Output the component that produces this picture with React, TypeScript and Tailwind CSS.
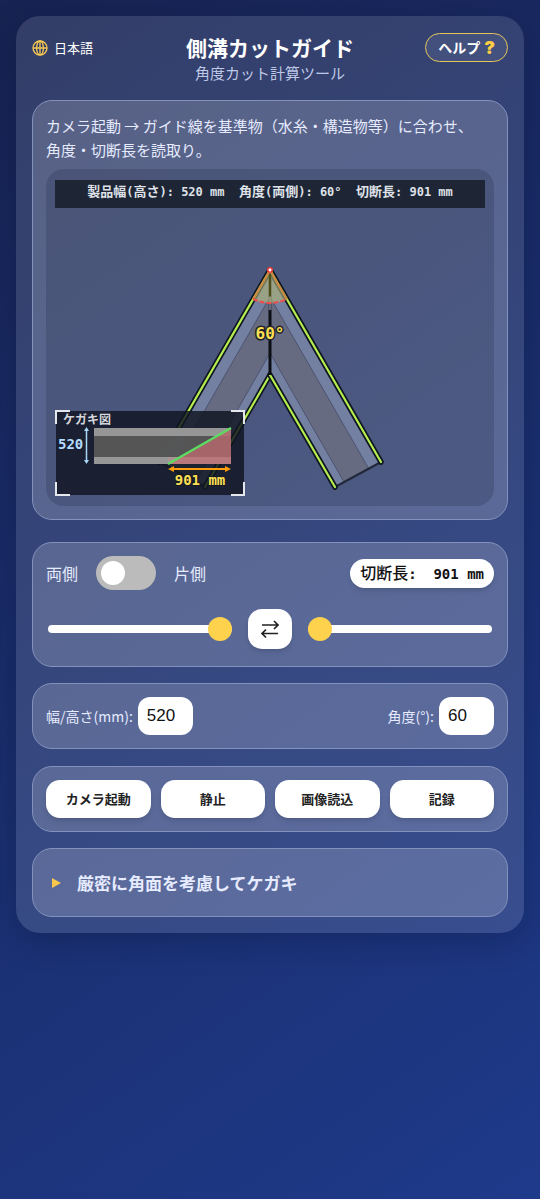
import type { ReactNode } from "react";
import { useState } from "react";

const MONO = "font-['DejaVu_Sans_Mono','Noto_Sans_CJK_JP',monospace]";

function Card({ children, className = "" }: { children: ReactNode; className?: string }) {
  return (
    <section className={`rounded-[20px] border border-[#8391bd] bg-white/18 p-[13px] ${className}`}>
      {children}
    </section>
  );
}

function Globe() {
  return (
    <svg viewBox="0 0 16 16" className="size-4" fill="none" stroke="#f3c751" strokeWidth="1.3" aria-hidden="true">
      <circle cx="8" cy="8" r="7" />
      <ellipse cx="8" cy="8" rx="3.4" ry="7" />
      <path d="M8 1v14M1 8h14" />
    </svg>
  );
}

function Diagram({ size, angle, cut }: { size: string; angle: string; cut: string }) {
  const leg = (
    <>
      <path d="M224 101L335 293L289 318L224 206Z" fill="#7480a1" />
      <path d="M224 128L323 300L298 313L224 184Z" fill="#666b81" stroke="#4c5370" strokeWidth="1" />
      <path d="M335 293L289 318" stroke="#20283a" strokeWidth="2" />
      <path d="M224 101L335 293M224 206L289 318" stroke="#101622" strokeWidth="5.5" strokeLinecap="round" />
      <path d="M224 101L335 293M224 206L289 318" stroke="#b5ee4f" strokeWidth="2.2" strokeLinecap="round" />
    </>
  );
  return (
    <svg viewBox="0 0 448 337" className={`block w-full rounded-[18px] bg-[#1a2340]/22 ${MONO}`} role="img" aria-label="角度カット図">
      <rect x="9" y="11" width="430" height="28" fill="#1e2535" />
      <text x="224" y="27" textAnchor="middle" fontSize="12" fontWeight="700" fill="#dfe2e8" className="whitespace-pre">
        <tspan fontSize="13">製品幅</tspan>(<tspan fontSize="13">高さ</tspan>
        {`): ${size} mm  `}
        <tspan fontSize="13">角度</tspan>(<tspan fontSize="13">両側</tspan>
        {`): ${angle}°  `}
        <tspan fontSize="13">切断長</tspan>
        {`: ${cut} mm`}
      </text>
      <g fill="none">
        <g transform="translate(448 0) scale(-1 1)">{leg}</g>
        {leg}
      </g>
      <path d="M224 101V206" stroke="#0b0e15" strokeWidth="3" />
      <path d="M224 128V141" stroke="#666b81" strokeWidth="3" />
      <path d="M224 101L207 130.500Q224 138 241 130.500Z" fill="#b3b777" fillOpacity=".6" />
      <path d="M224 105V127" stroke="#4d4d17" strokeWidth="2" />
      <path d="M207 130.500L224 101L241 130.500" stroke="#ce8542" strokeWidth="2" fill="none" />
      <path d="M207 130Q224 138 241 130" stroke="#ef4b4d" strokeWidth="2" strokeDasharray="5 2" fill="none" />
      <circle cx="224" cy="101" r="2.200" fill="#fff" stroke="#ef4444" strokeWidth="1.600" />
      <text x="224" y="170" textAnchor="middle" fontSize="16" fontWeight="700" fill="#ffe052" stroke="#20232c" strokeWidth="3" paintOrder="stroke">{`${angle}°`}</text>

      <rect x="10" y="242" width="188" height="84" fill="#111522" fillOpacity=".84" />
      <path d="M10 255V242H24M185 242H198V255M198 313V326H185M24 326H10V313" stroke="#e4e7ec" strokeWidth="2" fill="none" />
      <text x="17" y="255" fontSize="12" fontWeight="700" fill="#d5d7dd">ケガキ図</text>
      <path d="M48 259H185V295H48Z" fill="#595959" fillOpacity=".95" />
      <path d="M48 259H185V267H48ZM48 288H185V295H48Z" fill="#969696" />
      <path d="M122 295L185 259V295Z" fill="#b5686c" fillOpacity=".85" />
      <path d="M122 288H185V295H122Z" fill="#c98a8d" fillOpacity=".4" />
      <path d="M122 295L185 259" stroke="#5cdd61" strokeWidth="2.2" />
      <path d="M40.500 260V293" stroke="#a9d7fb" strokeWidth="1.500" />
      <path d="M40.500 258L43 262H38ZM40.500 295L43 291H38Z" fill="#a9d7fb" />
      <path d="M125 300H182" stroke="#ff9d0a" strokeWidth="2" />
      <path d="M122 300L128 297V303ZM185 300L179 297V303Z" fill="#ff9d0a" />
      <text x="12" y="280" fontSize="14" fontWeight="700" fill="#b5dcff">{size}</text>
      <text x="154" y="316" textAnchor="middle" fontSize="14" fontWeight="700" fill="#ffe052" stroke="#171a26" strokeWidth="2" paintOrder="stroke">{`${cut} mm`}</text>
    </svg>
  );
}

const range =
  "h-6 min-w-0 flex-1 cursor-pointer appearance-none bg-transparent [&::-webkit-slider-runnable-track]:h-2 [&::-webkit-slider-runnable-track]:rounded-full [&::-webkit-slider-runnable-track]:bg-white [&::-webkit-slider-thumb]:-mt-2 [&::-webkit-slider-thumb]:size-6 [&::-webkit-slider-thumb]:appearance-none [&::-webkit-slider-thumb]:rounded-full [&::-webkit-slider-thumb]:bg-[#ffd24d]";

const numberBox =
  "h-[38px] w-[55px] rounded-xl bg-white px-[9px] font-['Liberation_Sans',sans-serif] text-[17px] text-[#111]";

export default function App() {
  const [size, setSize] = useState("520");
  const [angle, setAngle] = useState("60");
  const cut = String(Math.round(Number(size) / Math.tan((Number(angle) * Math.PI) / 360)) || 0);

  return (
    <div className="min-h-screen bg-[linear-gradient(145deg,#172352,#1e3a8a)] p-4 font-['Noto_Sans_CJK_JP',sans-serif] text-[#e6ebff]">
      <main className="mx-auto max-w-3xl rounded-[24px] bg-white/12 p-4 shadow-[0_8px_32px_rgba(8,15,50,0.3)]">
        <header className="grid grid-cols-[1fr_auto_1fr] items-start pb-4">
          <button type="button" className="flex h-8 items-center gap-[6px] justify-self-start text-[13px] text-white">
            <Globe />
            日本語
          </button>
          <div className="text-center">
            <h1 className="text-[21px] leading-[30px] font-bold text-white">側溝カットガイド</h1>
            <p className="text-[15px] leading-[22px] text-[#bec8e6]">角度カット計算ツール</p>
          </div>
          <button
            type="button"
            className="mt-px flex h-[29px] items-center gap-1 justify-self-end rounded-full border border-[#e6c55a] bg-white/8 px-3 text-[14px] font-bold text-white"
          >
            ヘルプ
            <span className="font-['Inter',sans-serif] text-[18px] leading-5 font-black text-[#ffce45]">?</span>
          </button>
        </header>

        <Card>
          <p className="mb-[7px] text-[15px] leading-6">
            カメラ起動 → ガイド線を基準物（水糸・構造物等）に合わせ、
            <br />
            角度・切断長を読取り。
          </p>
          <Diagram size={size} angle={angle} cut={cut} />
        </Card>

        <Card className="mt-[22px]">
          <div className="flex items-center">
            <label className="flex cursor-pointer items-center gap-[18px] text-[16px]">
              両側
              <input type="checkbox" className="peer sr-only" aria-label="両側・片側の切替" />
              <span className="h-[34px] w-[60px] rounded-full bg-[#bbb] p-[5px] after:block after:size-6 after:rounded-full after:bg-white peer-checked:bg-[#ffd24d] peer-checked:after:ml-auto" />
              片側
            </label>
            <output className={`ml-auto flex h-[29px] items-baseline rounded-full bg-white px-[10px] text-[14px] leading-[29px] font-bold whitespace-pre text-[#111] shadow-md ${MONO}`}>
              <span className="text-[16px] font-medium">切断長</span>
              {`:  ${cut} mm`}
            </output>
          </div>
          <div className="mt-[19px] mb-1 flex items-center gap-4 px-[2px]">
            <input type="range" defaultValue="100" aria-label="左ガイド" className={range} />
            <button type="button" aria-label="左右入替" className="flex h-10 w-11 items-center justify-center rounded-[14px] bg-white text-[#222] shadow-md">
              <svg viewBox="0 0 20 20" className="size-5" fill="none" stroke="currentColor" strokeWidth="1.7" aria-hidden="true">
                <path d="M2 6H18M14 2L18 6L14 10M18 14.500H2M6 10.500L2 14.500L6 18.500" />
              </svg>
            </button>
            <input type="range" defaultValue="0" aria-label="右ガイド" className={range} />
          </div>
        </Card>

        <Card className="mt-4 flex items-center justify-between text-[14px]">
          <label className="flex items-center gap-[5px]">
            幅/高さ(mm):
            <input inputMode="numeric" value={size} onChange={(e) => setSize(e.target.value)} className={numberBox} />
          </label>
          <label className="flex items-center gap-[5px]">
            角度(°):
            <input inputMode="numeric" value={angle} onChange={(e) => setAngle(e.target.value)} className={numberBox} />
          </label>
        </Card>

        <Card className="mt-[17px] grid grid-cols-4 gap-[10px]">
          {["カメラ起動", "静止", "画像読込", "記録"].map((name) => (
            <button key={name} type="button" className="h-[38px] rounded-[14px] bg-white text-[13px] font-bold text-[#222] shadow-md">
              {name}
            </button>
          ))}
        </Card>

        <Card className="mt-4">
          <details>
            <summary className="flex h-[41px] cursor-pointer list-none items-center gap-4 px-[6px] text-[17px] font-bold">
              <svg viewBox="0 0 9 10" className="h-[10px] w-[9px]" fill="#f9c74c" aria-hidden="true">
                <path d="M0 0L9 5L0 10Z" />
              </svg>
              厳密に角面を考慮してケガキ
            </summary>
          </details>
        </Card>
      </main>
    </div>
  );
}
